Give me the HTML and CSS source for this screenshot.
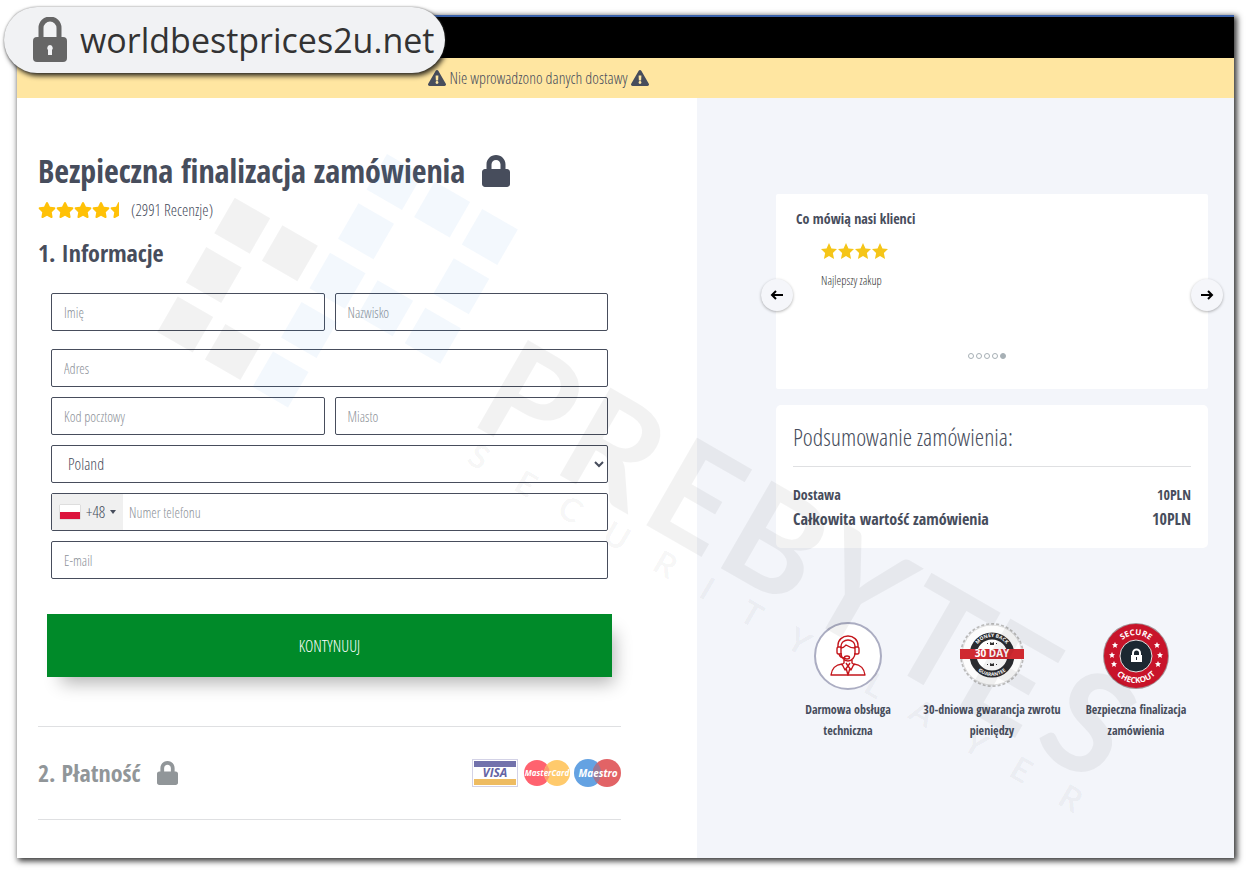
FILE: index.html
```html
<!DOCTYPE html>
<html lang="pl">
<head>
	<meta charset="utf-8">
	<title>Bezpieczna finalizacja zamówienia</title>
	<link rel="stylesheet" href="styles.css">
</head>
<body>
	<!-- icons used more than once -->
	<svg class="defs" width="0" height="0">
		<symbol id="lock" viewBox="0 0 448 512"><path d="M400 224h-24v-72C376 68.2 307.8 0 224 0S72 68.2 72 152v72H48c-26.5 0-48 21.5-48 48v192c0 26.5 21.5 48 48 48h352c26.5 0 48-21.5 48-48V272c0-26.5-21.5-48-48-48zm-104 0H152v-72c0-39.7 32.3-72 72-72s72 32.3 72 72v72z"/></symbol>
		<symbol id="warn" viewBox="0 0 576 512"><path d="M569.5 440C588 472 564.8 512 527.9 512H48c-36.900 0-60-40-41.600-72L246.400 24c18.500-32 64.700-32 83.200 0l239.900 416zM288 354c-25.400 0-46 20.600-46 46s20.600 46 46 46 46-20.600 46-46-20.600-46-46-46zm-43.700-165.300l7.400 136c.4 6.300 5.600 11.300 12 11.300h48.600c6.300 0 11.600-5 12-11.300l7.400-136c.4-6.900-5.100-12.700-12-12.700h-63.400c-6.900 0-12.300 5.800-12 12.700z"/></symbol>
		<symbol id="star" viewBox="0 0 576 512"><path d="M259.3 17.800L194 150.200 47.900 171.500c-26.200 3.800-36.700 36.100-17.700 54.600l105.700 103-25 145.500c-4.500 26.300 23.200 46 46.400 33.700L288 439.600l130.700 68.700c23.200 12.200 50.900-7.400 46.400-33.700l-25-145.500 105.700-103c19-18.500 8.500-50.800-17.700-54.600L382 150.200 316.700 17.800c-11.700-23.600-45.600-23.900-57.400 0z"/></symbol>
		<symbol id="sharp-star" viewBox="0 0 24 24"><path d="M12 0l3.700 8.300 8.300.8-6.200 6 1.800 8.900-7.600-4.600L4.400 24l1.800-8.900L0 9.100l8.300-.8z"/></symbol>
	</svg>

	<div class="window">
		<div class="topbar"></div>
		<div class="notice">
			<svg class="warn"><use href="#warn"/></svg>
			<span>Nie wprowadzono danych dostawy</span>
			<svg class="warn"><use href="#warn"/></svg>
		</div>
		<main class="columns">
			<section class="checkout">
				<h1>Bezpieczna finalizacja zamówienia <svg class="lock"><use href="#lock"/></svg></h1>
				<div class="rating">
					<svg class="star"><use href="#star"/></svg>
					<svg class="star"><use href="#star"/></svg>
					<svg class="star"><use href="#star"/></svg>
					<svg class="star"><use href="#star"/></svg>
					<svg class="half-star" viewBox="0 0 288 512"><use href="#star" width="576" height="512"/></svg>
					<span>(2991 Recenzje)</span>
				</div>
				<h2>1. Informacje</h2>
				<form>
					<div class="fields names">
						<input type="text" placeholder="Imię" aria-label="Imię">
						<input type="text" placeholder="Nazwisko" aria-label="Nazwisko">
					</div>
					<div class="fields">
						<input class="wide" type="text" placeholder="Adres" aria-label="Adres">
						<input type="text" placeholder="Kod pocztowy" aria-label="Kod pocztowy">
						<input type="text" placeholder="Miasto" aria-label="Miasto">
						<select class="wide" aria-label="Kraj"><option>Poland</option></select>
						<div class="phone wide">
							<button type="button" class="prefix"><span class="flag"></span>+48<span class="caret"></span></button>
							<input type="tel" placeholder="Numer telefonu" aria-label="Numer telefonu">
						</div>
						<input class="wide" type="email" placeholder="E-mail" aria-label="E-mail">
					</div>
					<button type="button" class="continue">KONTYNUUJ</button>
				</form>
				<div class="payment">
					<h2>2. Płatność <svg class="lock"><use href="#lock"/></svg></h2>
					<svg class="cards" viewBox="0 0 149 28">
						<rect x="0.500" y="0.500" width="45" height="27" fill="#fff" stroke="#d3d2e6"/>
						<path fill="#7272ac" d="M2 2h42v6H2z"/>
						<path fill="#eebc62" d="M2 20h42v6H2z"/>
						<text x="23" y="18" font-size="12" fill="#6464a4">VISA</text>
						<circle cx="65" cy="14" r="13" fill="#ff626f"/>
						<circle cx="85" cy="14" r="13" fill="#ffca6c"/>
						<path fill="#fb9a6b" d="M75 6a13 13 0 0 1 0 16 13 13 0 0 1 0-16z"/>
						<text x="75" y="17" font-size="8">MasterCard</text>
						<circle cx="116" cy="14" r="14" fill="#64a2e2"/>
						<circle cx="135" cy="14" r="14" fill="#e26366"/>
						<path fill="#9b7794" d="M125 4a14 14 0 0 1 0 20 14 14 0 0 1 0-20z"/>
						<text x="126" y="18" font-size="10">Maestro</text>
					</svg>
				</div>
			</section>

			<aside class="side">
				<div class="reviews">
					<h3>Co mówią nasi klienci</h3>
					<div class="review">
						<div class="review-stars">
							<svg><use href="#sharp-star"/></svg>
							<svg><use href="#sharp-star"/></svg>
							<svg><use href="#sharp-star"/></svg>
							<svg><use href="#sharp-star"/></svg>
						</div>
						<p>Najlepszy zakup</p>
					</div>
					<div class="dots"><i></i><i></i><i></i><i></i><i class="on"></i></div>
					<button type="button" class="arrow prev" aria-label="Poprzedni"><svg viewBox="0 0 14 10"><path d="M13 5H2M6 1L2 5l4 4"/></svg></button>
					<button type="button" class="arrow next" aria-label="Następny"><svg viewBox="0 0 14 10"><path d="M1 5h11M8 1l4 4-4 4"/></svg></button>
				</div>
				<div class="summary">
					<h2>Podsumowanie zamówienia:</h2>
					<div class="line"><span>Dostawa</span><span>10PLN</span></div>
					<div class="line total"><span>Całkowita wartość zamówienia</span><span>10PLN</span></div>
				</div>
				<div class="badges">
					<div class="badge">
						<svg viewBox="0 0 68 68">
							<circle cx="34" cy="34" r="33" fill="#fff" stroke="#abadc2" stroke-width="2"/>
							<g fill="none" stroke="#c4161c" stroke-width="1.400" stroke-linejoin="round">
								<path d="M27 26v-2a7 6 0 0 1 14 0v2M24 25v-2a10 9 0 0 1 20 0v2"/>
								<path d="M27 25h-2.500q-1.500 0-1.500 2v3q0 2 1.500 2H27zM41 25h2.500q1.500 0 1.500 2v3q0 2-1.500 2H41z"/>
								<path d="M27 26c3 0 4-2 5-3 3 2 5 3 9 3M27 31c0 4 3 8 7 8s7-4 7-8M25 32q1 4 6 4"/>
								<ellipse cx="33" cy="35.500" rx="2.500" ry="1.500"/>
								<path d="M30 38v3l-3 2M38 38v3l3 2M28 42l3 6 3-4 3 4 3-6M34 44l-2-3M34 44l2-3M32 46l2 7 2-7"/>
								<path d="M28 42c-7 1-10 4-11 11h34c-1-7-4-10-11-11"/>
							</g>
						</svg>
						<p>Darmowa obsługa<br>techniczna</p>
					</div>
					<div class="badge">
						<svg viewBox="0 0 68 68">
							<path id="top30" d="M16 33a18 18 0 0 1 36 0" fill="none"/>
							<path id="bot30" d="M13 33a21 21 0 0 0 42 0" fill="none"/>
							<circle cx="34" cy="33" r="31" fill="none" stroke="#bbb" stroke-width="2" stroke-dasharray="3 2"/>
							<circle cx="34" cy="33" r="30" fill="#fcfcfc" stroke="#ddd"/>
							<circle cx="34" cy="33" r="19" fill="#fff" stroke="#2b2c30" stroke-width="7"/>
							<g font-size="5" font-weight="700" fill="#fff" text-anchor="middle">
								<text><textPath href="#top30" startOffset="50%">MONEY BACK</textPath></text>
								<text><textPath href="#bot30" startOffset="50%">GUARANTEE</textPath></text>
							</g>
							<path fill="#333" d="M29 21h1v1h-1zM32 20l2 1 2-1v3h-4zM38 21h1v1h-1zM29 42h1v1h-1zM32 41l2 1 2-1v3h-4zM38 42h1v1h-1z"/>
							<path fill="#cf2a31" d="M2 27h64v10H2z"/>
							<text x="34" y="35" font-size="10" font-weight="700" fill="#fff" text-anchor="middle">30 DAY</text>
						</svg>
						<p>30-dniowa gwarancja zwrotu<br>pieniędzy</p>
					</div>
					<div class="badge">
						<svg viewBox="0 0 68 68">
							<path id="topSec" d="M13 34a21 21 0 0 1 42 0" fill="none"/>
							<path id="botSec" d="M7 34a27 27 0 0 0 54 0" fill="none"/>
							<circle cx="34" cy="34" r="33" fill="#a49296"/>
							<circle cx="34" cy="34" r="32" fill="#c8142a"/>
							<circle cx="34" cy="34" r="16" fill="#1c2731" stroke="#e5dfe0" stroke-width="1"/>
							<g font-size="8" font-weight="700" fill="#fff" text-anchor="middle">
								<text><textPath href="#topSec" startOffset="50%">SECURE</textPath></text>
								<text><textPath href="#botSec" startOffset="50%">CHECKOUT</textPath></text>
							</g>
							<g fill="#fff">
								<use href="#sharp-star" x="10" y="20" width="6" height="6"/>
								<use href="#sharp-star" x="7" y="30" width="6" height="6"/>
								<use href="#sharp-star" x="9" y="39" width="6" height="6"/>
								<use href="#sharp-star" x="52" y="20" width="6" height="6"/>
								<use href="#sharp-star" x="55" y="30" width="6" height="6"/>
								<use href="#sharp-star" x="53" y="39" width="6" height="6"/>
								<path d="M29 33h11v7H29z"/>
							</g>
							<path d="M31 33v-2a3.500 3.500 0 0 1 7 0v2" fill="none" stroke="#fff" stroke-width="2"/>
							<path d="M34 35h1v3h-1z" fill="#1c2731"/>
						</svg>
						<p>Bezpieczna finalizacja<br>zamówienia</p>
					</div>
				</div>
			</aside>
		</main>
	</div>

	<div class="address">
		<svg viewBox="0 0 34 46">
			<path d="M8 22V11a9 9 0 0 1 18 0v11" fill="none" stroke="#666" stroke-width="5"/>
			<rect y="20" width="34" height="25" rx="4" fill="#666"/>
			<path d="M17 28a3 3 0 0 1 2 5v5h-4v-5a3 3 0 0 1 2-5z" fill="#f1f2f4"/>
		</svg>
		<span>worldbestprices2u.net</span>
	</div>

	<svg class="watermark" viewBox="0 0 1249 873" aria-hidden="true">
		<g transform="translate(387 154) rotate(30)">
			<path fill="#2e8fe0" fill-opacity=".06" d="M0 0h41v41H0zM55 0h41v41H55zM110 0h41v41H110zM0 57h41v41H0zM0 114h41v41H0zM0 171h41v41H0zM0 228h41v41H0zM55 114h41v41H55zM110 57h41v41H110zM110 114h41v41H110z"/>
			<path fill-opacity=".05" d="M-110 114h41v41h-41zM-55 114h41v41h-41zM-110 171h41v41h-41zM-110 228h41v41h-41zM-55 228h41v41h-41z"/>
		</g>
		<g transform="translate(478 428) rotate(30)">
			<text class="brand" x="-12 83 183 269 365 463 545 638">PREBYTES</text>
			<text class="tagline" x="6 60 110 162 220 274 320 374 464 516 578 632 688" y="36">SECURITYLAYER</text>
		</g>
	</svg>
</body>
</html>
```
FILE: styles.css
```css
* {
	box-sizing: border-box;
}
body {
	position: relative;
	min-height: 100vh;
	margin: 0;
	padding: 15px 15px 15px 17px;
	display: flex;
	flex-direction: column;
	background: #fff;
	color: #474d5c;
	font-family: "Open Sans Condensed Light", "Open Sans Light Condensed", "Liberation Sans Narrow", "Open Sans", sans-serif;
	font-weight: 300;
	font-size: 16px;
}
h1, h2, h3, p {
	margin: 0;
}
h1, h2, h3, .line, .badges {
	font-family: "Open Sans Condensed", "Liberation Sans Narrow", sans-serif;
	font-weight: 700;
}
svg {
	display: block;
	fill: currentColor;
}
input, select, button {
	font: inherit;
	color: inherit;
}
.defs {
	position: absolute;
}
.window {
	flex: 1;
	display: flex;
	flex-direction: column;
	background: #fff;
	box-shadow: 2px 2px 6px 1px #333;
}
.topbar {
	height: 43px;
	background: #000;
	border-top: 2px solid #3a62ab;
}
.notice {
	height: 40px;
	padding-right: 174px;
	display: flex;
	align-items: center;
	justify-content: center;
	gap: 3px;
	background: #ffe6a1;
}
.warn {
	width: 18px;
	height: 16px;
}
.columns {
	flex: 1;
	display: grid;
	grid-template-columns: 680fr 537fr;
}

/* left column */
.checkout {
	padding: 53px 76px 38px 21px;
}
h1 {
	display: flex;
	align-items: center;
	gap: 17px;
	font-size: 32px;
	line-height: 40px;
}
h1 .lock {
	width: 28px;
	height: 32px;
}
.rating {
	display: flex;
	align-items: center;
	margin-top: 7px;
	line-height: 24px;
}
.rating svg {
	color: #ffc107;
	height: 16px;
}
.star {
	width: 18px;
}
.half-star {
	width: 9px;
}
.rating span {
	margin-left: 12px;
}
h2 {
	font-size: 24px;
	line-height: 32px;
}
.rating + h2 {
	margin-top: 15px;
}
form {
	margin-top: 24px;
	padding: 0 9px 49px;
}
.fields {
	display: grid;
	grid-template-columns: 1fr 1fr;
	gap: 10px;
	padding: 0 4px;
}
.names {
	margin-bottom: 18px;
}
.wide {
	grid-column: 1 / 3;
}
.fields input, .fields select, .phone {
	width: 100%;
	min-width: 0;
	height: 38px;
	border: 1px solid #474d5c;
	border-radius: 2px;
	background: #fff;
	padding: 0 12px;
}
.fields input {
	font-size: 14px;
}
.fields input::placeholder {
	color: #8d9299;
}
.fields select {
	padding: 0 0 0 12px;
}
.fields .phone {
	display: flex;
	padding: 0;
}
.fields .phone input {
	height: 36px;
	border: 0;
	padding: 0 6px;
}
.prefix {
	flex: none;
	display: flex;
	align-items: center;
	width: 71px;
	padding: 0 0 0 8px;
	border: 0;
	background: #f0f0f0;
}
.flag {
	width: 20px;
	height: 14px;
	margin-right: 6px;
	background: linear-gradient(#fff 50%, #dc143c 50%);
	box-shadow: 0 0 1px #888;
}
.caret {
	margin-left: 5px;
	border: 3px solid transparent;
	border-top: 4px solid #474d5c;
	border-bottom: 0;
}
.continue {
	display: block;
	width: 100%;
	height: 63px;
	margin-top: 35px;
	border: 0;
	background: #008a29;
	color: #fff;
	box-shadow: 8px 12px 18px -6px rgba(0, 0, 0, .3);
}
.payment {
	height: 94px;
	display: flex;
	align-items: center;
	justify-content: space-between;
	border-top: 1px solid #dfe0e2;
	border-bottom: 1px solid #dfe0e2;
}
.payment h2 {
	display: flex;
	align-items: center;
	gap: 17px;
	color: #919699;
}
.payment .lock {
	width: 21px;
	height: 24px;
}
.cards {
	width: 149px;
	height: 28px;
	font-family: "Open Sans", sans-serif;
	font-weight: 700;
	font-style: italic;
	text-anchor: middle;
	fill: #fff;
}

/* right column */
.side {
	padding: 96px 26px 20px 79px;
	background: #f3f5fa;
}
.reviews {
	position: relative;
	height: 195px;
	padding: 15px 20px;
	background: #fff;
	border-radius: 2px;
}
h3 {
	font-size: 14px;
	line-height: 20px;
}
.review {
	padding: 14px 25px 0;
}
.review-stars {
	display: flex;
	gap: 1px;
	color: #f5c518;
}
.review-stars svg {
	width: 16px;
	height: 16px;
}
.review p {
	margin-top: 12px;
	font-size: 12px;
	line-height: 20px;
	color: #333;
}
.dots {
	position: absolute;
	bottom: 30px;
	left: 0;
	right: 10px;
	display: flex;
	justify-content: center;
	gap: 2px;
}
.dots i {
	width: 6px;
	height: 6px;
	border: 1px solid #a7b0b5;
	border-radius: 50%;
}
.dots .on {
	background: #a7b0b5;
}
.arrow {
	position: absolute;
	top: 85px;
	width: 32px;
	height: 32px;
	padding: 0 9px;
	border: 0;
	border-radius: 50%;
	background: #f5f6fa;
	box-shadow: 0 1px 3px rgba(0, 0, 0, .3);
}
.arrow svg {
	width: 14px;
	height: 10px;
	fill: none;
	stroke: #000;
	stroke-width: 2;
}
.prev {
	left: -15px;
}
.next {
	right: -15px;
}
.summary {
	margin-top: 16px;
	padding: 16px 17px 17px;
	background: #fff;
	border-radius: 5px;
}
.summary h2 {
	padding-bottom: 13px;
	margin-bottom: 16px;
	border-bottom: 1px solid #dfe0e2;
	font-family: inherit;
	font-weight: 300;
}
.line {
	display: flex;
	justify-content: space-between;
	font-size: 14px;
	line-height: 24px;
}
.total {
	font-size: 16px;
}
.badges {
	display: grid;
	grid-template-columns: 1fr 1fr 1fr;
	margin-top: 74px;
	font-size: 12px;
	line-height: 21px;
	text-align: center;
}
.badge svg {
	width: 68px;
	height: 68px;
	margin: 0 auto 9px;
	font-family: "Open Sans", sans-serif;
}

/* laid over the page */
.address {
	position: absolute;
	top: 7px;
	left: 4px;
	width: 441px;
	height: 66px;
	padding-left: 29px;
	display: flex;
	align-items: center;
	gap: 13px;
	border-radius: 33px;
	background: #f1f2f4;
	box-shadow: 2px 3px 5px rgba(0, 0, 0, .8), 0 0 2px #999;
	color: #333;
	font-family: "Open Sans", sans-serif;
	font-weight: 400;
	font-size: 34px;
}
.address svg {
	width: 34px;
	height: 46px;
}
.watermark {
	position: absolute;
	top: 0;
	left: 0;
	width: 100%;
	pointer-events: none;
	fill: #000;
	font-family: "Lato", sans-serif;
	font-weight: 700;
}
.brand {
	font-size: 140px;
	fill-opacity: .05;
}
.tagline {
	font-size: 33px;
	fill-opacity: .04;
}
```
